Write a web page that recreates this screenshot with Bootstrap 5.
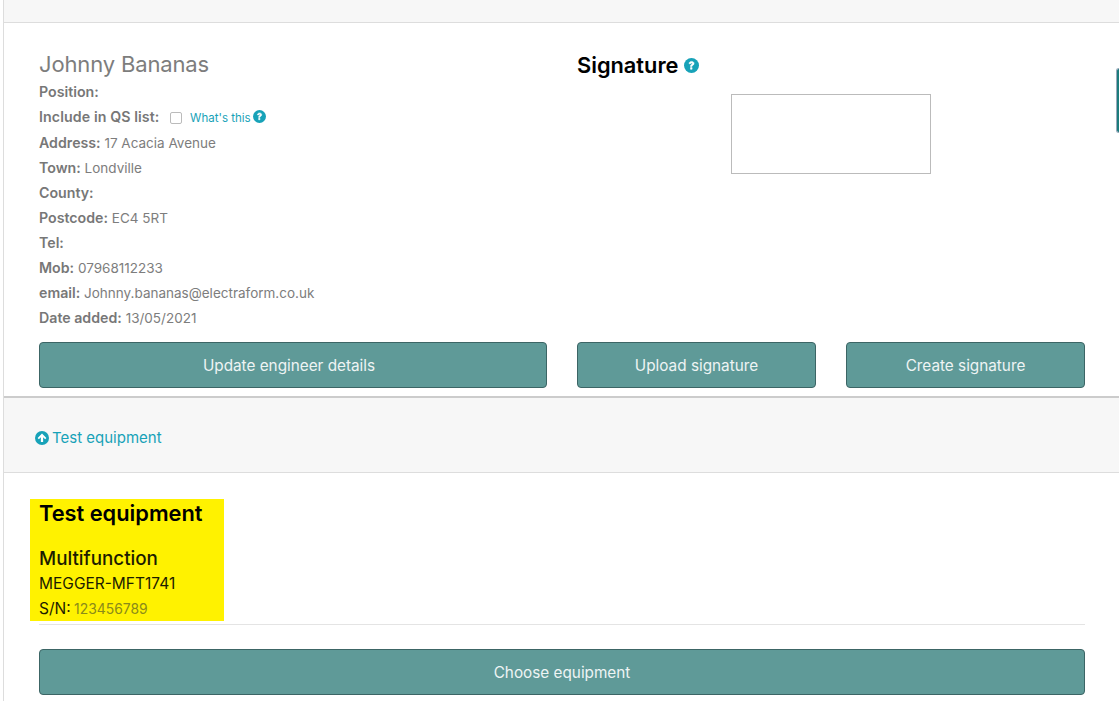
<!DOCTYPE html>
<html lang="en">
<head>
  <meta charset="UTF-8" />
  <meta name="viewport" content="width=device-width, initial-scale=1.0" />
  <title>Engineer details</title>
  <link href="https://cdn.jsdelivr.net/npm/bootstrap@5.3.3/dist/css/bootstrap.min.css" rel="stylesheet" />
  <style>
    html, body { height: 701px; overflow: hidden; }
    body {
      font-family: Inter, "Liberation Sans", sans-serif;
      font-size: 14px;
      color: #777;
      background: #fff;
    }
    .page-wrap { margin-left: 3px; border-left: 1px solid #ddd; height: 701px; }
    .band-top { height: 23px; background: #f7f7f7; border-bottom: 1px solid #ddd; }
    .engineer-body { height: 375px; padding: 26px 34px 0 35px; border-bottom: 2px solid #ccc; }
    .engineer-name { font-size: 22px; font-weight: 400; line-height: 30px; margin: 0; letter-spacing: -.15px; color: #7d7d7d; }
    .info-line { height: 25px; line-height: 25px; font-size: 13.5px; white-space: nowrap; color: #7d7d7d; }
    .info-line b { font-size: 14.2px; font-weight: 600; color: #777; }
    .qs-line { height: 26px; }
    .qs-label { letter-spacing: .1px; }
    .qs-check {
      appearance: none;
      width: 12px;
      height: 12px;
      margin: 0 0 0 7px;
      vertical-align: -2px;
      background: #fff;
      border: 1px solid #bbb;
      border-radius: 2px;
    }
    .whats-this { font-size: 11.5px; color: #17a2b8; margin-left: 4px; text-decoration: none; }
    .sig-title { font-size: 21.8px; font-weight: 600; color: #000; line-height: 30px; margin: 1px 0 0; display: flex; align-items: center; gap: 6px; }
    .sig-box { width: 200px; height: 80px; border: 1px solid #bbb; margin: 14px 0 0 154px; }
    .left-col { width: 508px; }
    .right-col { width: 508px; margin-left: 30px; }
    .btn-teal {
      background: #5f9a98;
      border: 1px solid #3c6565;
      color: #eef4f4;
      font-size: 15.3px;
      height: 46px;
      padding-top: 8px;
      border-radius: 4px;
      width: 100%;
    }
    .btn-teal:hover { background: #5f9a98; color: #eef4f4; border-color: #3c6565; }
    .btn-update { padding-right: 20px; }
    .actions-left { margin-top: 12px; }
    .actions-right { margin-top: 168px; gap: 30px; }
    .band-toggle { height: 75px; background: #f7f7f7; border-bottom: 1px solid #ddd; padding: 7px 0 0 31px; gap: 3px; }
    .band-toggle a { color: #17a2b8; font-size: 15px; text-decoration: none; }
    .band-toggle svg { margin-top: -1px; }
    .equipment-body { padding: 26px 34px 0 35px; }
    .equipment-mark { width: 194px; height: 122px; margin-left: -9px; padding-left: 9px; background: #fff200; color: #1c1c00; }
    .equipment-mark h4 { font-size: 21.8px; font-weight: 600; color: #000; line-height: 28px; margin: 0 0 19px; }
    .equipment-mark h5 { font-size: 18.8px; font-weight: 500; line-height: 25px; margin: 0; }
    .equipment-line { font-size: 15.5px; line-height: 25px; }
    .serial { color: #8a8a1a; font-size: 13.9px; margin-left: -1px; }
    .equipment-rule { margin: 3px 0 24px; border: 0; border-top: 1px solid #e4e4e4; opacity: 1; }
    .choose-btn { width: 1046px; }
    .side-tab { position: fixed; right: 0; top: 68px; width: 3px; height: 65px; background: #1c7c7c; border: 1px solid #9ab; border-right: 0; border-radius: 3px 0 0 3px; }
  </style>
</head>
<body>
  <div class="page-wrap">
    <div class="band-top"></div>

    <div class="engineer-body d-flex">
      <div class="left-col">
        <h3 class="engineer-name">Johnny Bananas</h3>
        <div class="info-line"><b>Position:</b></div>
        <div class="info-line qs-line"><b class="qs-label">Include in QS list:</b> <input type="checkbox" class="qs-check"> <a href="#" class="whats-this">What's this</a>
          <svg width="13" height="13" viewBox="0 0 16 16" style="vertical-align:-1px;margin-left:-1px"><circle cx="8" cy="8" r="8" fill="#17a2b8"/><path d="M5.4 6.1c0-1.6 1.2-2.5 2.7-2.5s2.6.9 2.6 2.2c0 1.1-.6 1.6-1.4 2.1-.6.4-.8.6-.8 1.2H6.9c0-1.2.4-1.7 1.1-2.2.6-.4.9-.6.9-1s-.3-.7-.8-.7-.9.3-.9.9H5.4zM6.9 10.2h1.7v1.8H6.9z" fill="#fff" stroke="#fff" stroke-width=".6"/></svg>
        </div>
        <div class="info-line"><b>Address:</b> 17 Acacia Avenue</div>
        <div class="info-line"><b>Town:</b> Londville</div>
        <div class="info-line"><b>County:</b></div>
        <div class="info-line"><b>Postcode:</b> EC4 5RT</div>
        <div class="info-line"><b>Tel:</b></div>
        <div class="info-line"><b>Mob:</b> 07968112233</div>
        <div class="info-line"><b>email:</b> Johnny.bananas@electraform.co.uk</div>
        <div class="info-line"><b>Date added:</b> 13/05/2021</div>
        <div class="actions-left"><button type="button" class="btn btn-teal btn-update">Update engineer details</button></div>
      </div>
      <div class="right-col">
        <h3 class="sig-title">Signature
          <svg width="15" height="15" viewBox="0 0 16 16"><circle cx="8" cy="8" r="8" fill="#17a2b8"/><path d="M5.4 6.1c0-1.6 1.2-2.5 2.7-2.5s2.6.9 2.6 2.2c0 1.1-.6 1.6-1.4 2.1-.6.4-.8.6-.8 1.2H6.9c0-1.2.4-1.7 1.1-2.2.6-.4.9-.6.9-1s-.3-.7-.8-.7-.9.3-.9.9H5.4zM6.9 10.2h1.7v1.8H6.9z" fill="#fff" stroke="#fff" stroke-width=".6"/></svg>
        </h3>
        <div class="sig-box"></div>
        <div class="actions-right d-flex">
          <button type="button" class="btn btn-teal">Upload signature</button>
          <button type="button" class="btn btn-teal">Create signature</button>
        </div>
      </div>
    </div>

    <div class="band-toggle d-flex align-items-center">
      <svg width="14" height="14" viewBox="0 0 16 16"><circle cx="8" cy="8" r="8" fill="#17a2b8"/><path d="M8 2.8 13 8l-1.4 1.4-2.3-2.3v5.6H6.7V7.1L4.4 9.4 3 8z" fill="#fff"/></svg>
      <a href="#">Test equipment</a>
    </div>

    <div class="equipment-body">
      <div class="equipment-mark">
        <h4>Test equipment</h4>
        <h5>Multifunction</h5>
        <div class="equipment-line">MEGGER-MFT1741</div>
        <div class="equipment-line">S/N: <span class="serial">123456789</span></div>
      </div>
      <hr class="equipment-rule" />
      <button type="button" class="btn btn-teal choose-btn">Choose equipment</button>
    </div>
  </div>
  <div class="side-tab"></div>

  <script src="https://cdn.jsdelivr.net/npm/bootstrap@5.3.3/dist/js/bootstrap.bundle.min.js"></script>
</body>
</html>
